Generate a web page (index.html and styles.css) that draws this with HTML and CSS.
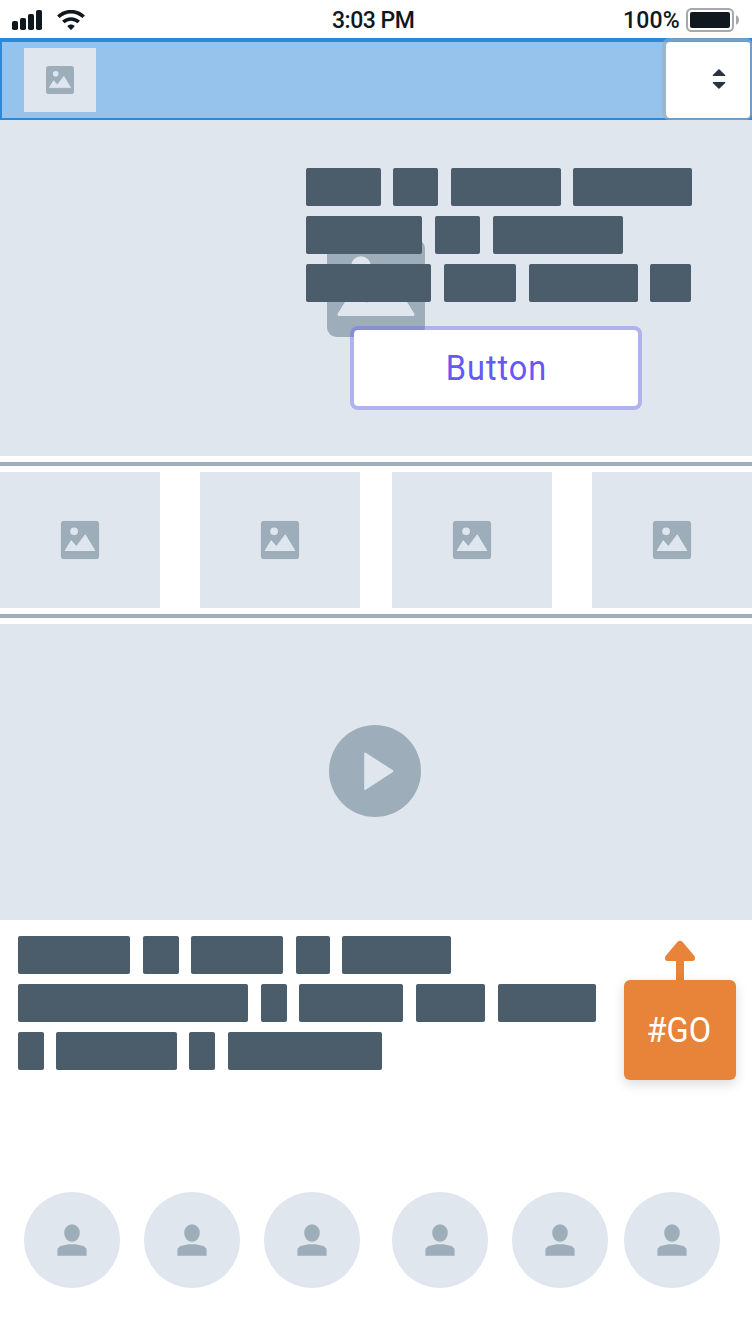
FILE: index.html
```html
<!DOCTYPE html>
<html lang="en">
<head>
<meta charset="utf-8">
<title>Mobile wireframe</title>
<link rel="stylesheet" href="styles.css">
</head>
<body>
<svg class="defs" aria-hidden="true">
  <symbol id="image" viewBox="0 0 28 28">
    <rect class="icon-body" width="28" height="28" rx="2.8"/>
    <circle class="icon-cut" cx="9.7" cy="7.7" r="2.8"/>
    <path class="icon-cut icon-round" d="M3.4 21.6 7.6 14.7 11.4 18.9 17.8 10.4 24.6 21.6Z"/>
  </symbol>
  <symbol id="person" viewBox="0 0 30 32">
    <ellipse class="icon-body" cx="15" cy="9" rx="7.8" ry="8.8"/>
    <path class="icon-body" d="M.4 31.7V26C.4 22.5 7 20.3 15 20.3S29.6 22.5 29.6 26V31.7Z"/>
  </symbol>
</svg>
<div class="screen">
  <div class="status">
    <div class="status-left">
      <svg width="30" height="20" viewBox="0 0 30 20"><g class="ink"><rect y="11" width="6" height="9" rx="1.8"/><rect x="8" y="8" width="6" height="12" rx="1.8"/><rect x="16" y="4" width="6" height="16" rx="1.8"/><rect x="24" width="6" height="20" rx="1.8"/></g></svg>
      <svg width="28" height="20" viewBox="0 0 28 20"><g class="wave"><path d="M1.3 6.8C8.5-.1 19.5-.1 26.7 6.8"/><path d="M6.3 12C10.7 7.9 17.3 7.9 21.7 12"/></g><path class="ink" d="M10.2 16C12.3 13.9 15.7 13.9 17.8 16L14.7 19.5Q14 20.2 13.3 19.5Z"/></svg>
    </div>
    <div class="time">3:03 PM</div>
    <div class="status-right"><span class="percent">100%</span>
      <svg width="53" height="24" viewBox="0 0 53 24"><rect class="shell" x="1" y="1" width="46" height="22" rx="4.5"/><rect class="ink" x="4" y="4" width="40" height="16" rx="2"/><path class="cap" d="M50 7.2C54 8.5 54 15.5 50 16.8Z"/></svg>
    </div>
  </div>
  <header class="header">
    <div class="logo"><svg width="28" height="28"><use href="#image"/></svg></div>
    <div class="select"><svg width="14" height="20" viewBox="0 0 14 20"><path d="M7 0 13.2 6V7H.8V6ZM7 20 13.2 14V13H.8V14Z"/></svg></div>
  </header>
  <section class="hero">
    <svg class="hero-image" width="98" height="98"><use href="#image"/></svg>
    <div class="lines">
      <div class="line"><i style="width:74.8px"></i><i style="width:44.8px"></i><i style="width:110px"></i><i style="width:119.2px"></i></div>
      <div class="line"><i style="width:116.2px"></i><i style="width:45.4px"></i><i style="width:130.2px"></i></div>
      <div class="line"><i style="width:125.2px"></i><i style="width:72.7px"></i><i style="width:108.7px"></i><i style="width:40.4px"></i></div>
    </div>
    <div class="button"><span>Button</span></div>
  </section>
  <section class="thumbs">
    <div class="thumb"><svg width="40" height="40"><use href="#image" x=".7" y=".7" width="38.6" height="38.6"/></svg></div>
    <div class="thumb"><svg width="40" height="40"><use href="#image" x=".7" y=".7" width="38.6" height="38.6"/></svg></div>
    <div class="thumb"><svg width="40" height="40"><use href="#image" x=".7" y=".7" width="38.6" height="38.6"/></svg></div>
    <div class="thumb"><svg width="40" height="40"><use href="#image" x=".7" y=".7" width="38.6" height="38.6"/></svg></div>
  </section>
  <section class="video"><svg width="92" height="92" viewBox="0 0 92 92"><circle class="icon-body" cx="46" cy="46" r="46"/><path class="icon-cut play" d="M36.2 28.5 63.4 46.2 36.2 64Z"/></svg></section>
  <section class="article">
    <div class="lines">
      <div class="line"><i style="width:112.2px"></i><i style="width:36px"></i><i style="width:92.1px"></i><i style="width:34px"></i><i style="width:108.7px"></i></div>
      <div class="line"><i style="width:230.3px"></i><i style="width:26px"></i><i style="width:103.6px"></i><i style="width:69.9px"></i><i style="width:97.6px"></i></div>
      <div class="line"><i style="width:25.9px"></i><i style="width:120.4px"></i><i style="width:26px"></i><i style="width:153.6px"></i></div>
    </div>
    <div class="go">
      <svg width="32" height="40" viewBox="0 0 32 40"><path d="M13.8 1.6Q16 0 18.2 1.6L30 15.4C32 18 31 21 28 21H20V40H12V21H4C1 21 0 18 2 15.4Z"/></svg>
      <div class="go-box"><span>#GO</span></div>
    </div>
  </section>
  <section class="avatars">
    <div class="avatar"><svg width="30" height="32"><use href="#person"/></svg></div>
    <div class="avatar"><svg width="30" height="32"><use href="#person"/></svg></div>
    <div class="avatar"><svg width="30" height="32"><use href="#person"/></svg></div>
    <div class="avatar"><svg width="30" height="32"><use href="#person"/></svg></div>
    <div class="avatar"><svg width="30" height="32"><use href="#person"/></svg></div>
    <div class="avatar"><svg width="30" height="32"><use href="#person"/></svg></div>
  </section>
</div>
</body>
</html>
```
FILE: styles.css
```css
* { box-sizing: border-box; }
body { margin: 0; background: #fff; font-family: Roboto, "Liberation Sans", sans-serif; }
svg { display: block; flex: none; }
.defs { display: none; }
.icon-body { fill: #9eadba; }
.icon-cut { fill: #dfe6ed; }
.icon-round { stroke: #dfe6ed; stroke-width: .8; stroke-linejoin: round; }
.screen { width: 752px; height: 1336px; overflow: hidden; }

.status { height: 38px; display: grid; grid-template-columns: 1fr auto 1fr; align-items: center; padding: 2px 13px 0 12px; color: #10181f; }
.status-left { display: flex; gap: 15px; }
.status-right { display: flex; align-items: center; justify-content: flex-end; gap: 6px; }
.time, .percent { font-size: 23px; line-height: 26px; font-weight: 500; white-space: nowrap; padding-top: 2px; }
.time { width: 82px; letter-spacing: -.5px; margin-left: -5px; }
.percent { letter-spacing: .2px; }
.ink { fill: #10181f; }
.wave { fill: none; stroke: #10181f; stroke-width: 3.6; }
.shell { fill: none; stroke: #a5a9ad; stroke-width: 2; }
.cap { fill: #a5a9ad; }

.header { height: 82px; display: flex; justify-content: space-between; background: #96c3ec; box-shadow: inset 0 2px #2c88d9, inset 0 0 0 2px #2c88d9; border-top: 2px solid #2c88d9; padding-left: 24px; }
.logo { width: 72px; height: 64px; margin-top: 8px; background: #dfe6ed; display: flex; align-items: center; justify-content: center; }
.select { width: 90px; height: 82px; margin-top: -2px; border: solid rgba(158, 173, 186, .6); border-width: 4px 2px 2px 4px; border-radius: 8px 6px 6px 7px; background: #fff; background-clip: padding-box; display: flex; align-items: center; justify-content: flex-end; padding: 0 24px 2px 0; }
.select svg { fill: #273444; }

.hero { position: relative; height: 336px; background: #dfe6ed; padding: 48px 0 0 306px; }
.hero-image { position: absolute; left: 327px; top: 119px; }
.lines { position: relative; display: flex; flex-direction: column; gap: 10px; }
.line { display: flex; gap: 12.55px; height: 38px; }
.line i { flex: none; background: #4b5c6b; border-radius: 2px; }
.button { position: relative; width: 292px; height: 84px; margin: 24px 0 0 44px; border: 4px solid rgba(103, 100, 243, .4); border-radius: 8px; background: #fff; background-clip: padding-box; display: flex; align-items: center; justify-content: center; color: #6558f5; font-size: 35px; letter-spacing: 1px; }
.button span { transform: scaleX(.93); }

.thumbs { height: 168px; display: grid; grid-template-columns: 160px 152px 160px 160px; column-gap: 40px; padding: 16px 0; background: linear-gradient(#fff 6px, #9eadba 6px 10px, #fff 10px 158px, #9eadba 158px 162px, #fff 162px); }
.thumb { width: 160px; display: flex; align-items: center; justify-content: center; background: #dfe6ed; }

.video { height: 296px; background: #dfe6ed; display: flex; align-items: center; justify-content: center; padding: 0 2px 2px 0; }
.play { stroke: #dfe6ed; stroke-width: 2; stroke-linejoin: round; }

.article { height: 272px; display: flex; justify-content: space-between; padding: 16px 16px 0 18px; }
.go { width: 112px; padding-top: 4px; display: flex; flex-direction: column; align-items: center; }
.go svg { fill: #e8833a; }
.go-box { width: 112px; height: 100px; border-radius: 6px; background: #e8833a; color: #fff; display: flex; align-items: center; justify-content: center; font-size: 35px; box-shadow: 0 4px 12px rgba(0, 0, 0, .15); }
.go-box span { transform: translateX(-1px) scaleX(.93); }

.avatars { display: flex; padding-left: 24px; gap: 24px; }
.avatar { width: 96px; height: 96px; border-radius: 50%; background: #dfe6ed; display: flex; align-items: center; justify-content: center; flex: none; }
.avatar:nth-child(4) { margin-left: 8px; }
.avatar:nth-child(6) { margin-left: -8px; }
```
